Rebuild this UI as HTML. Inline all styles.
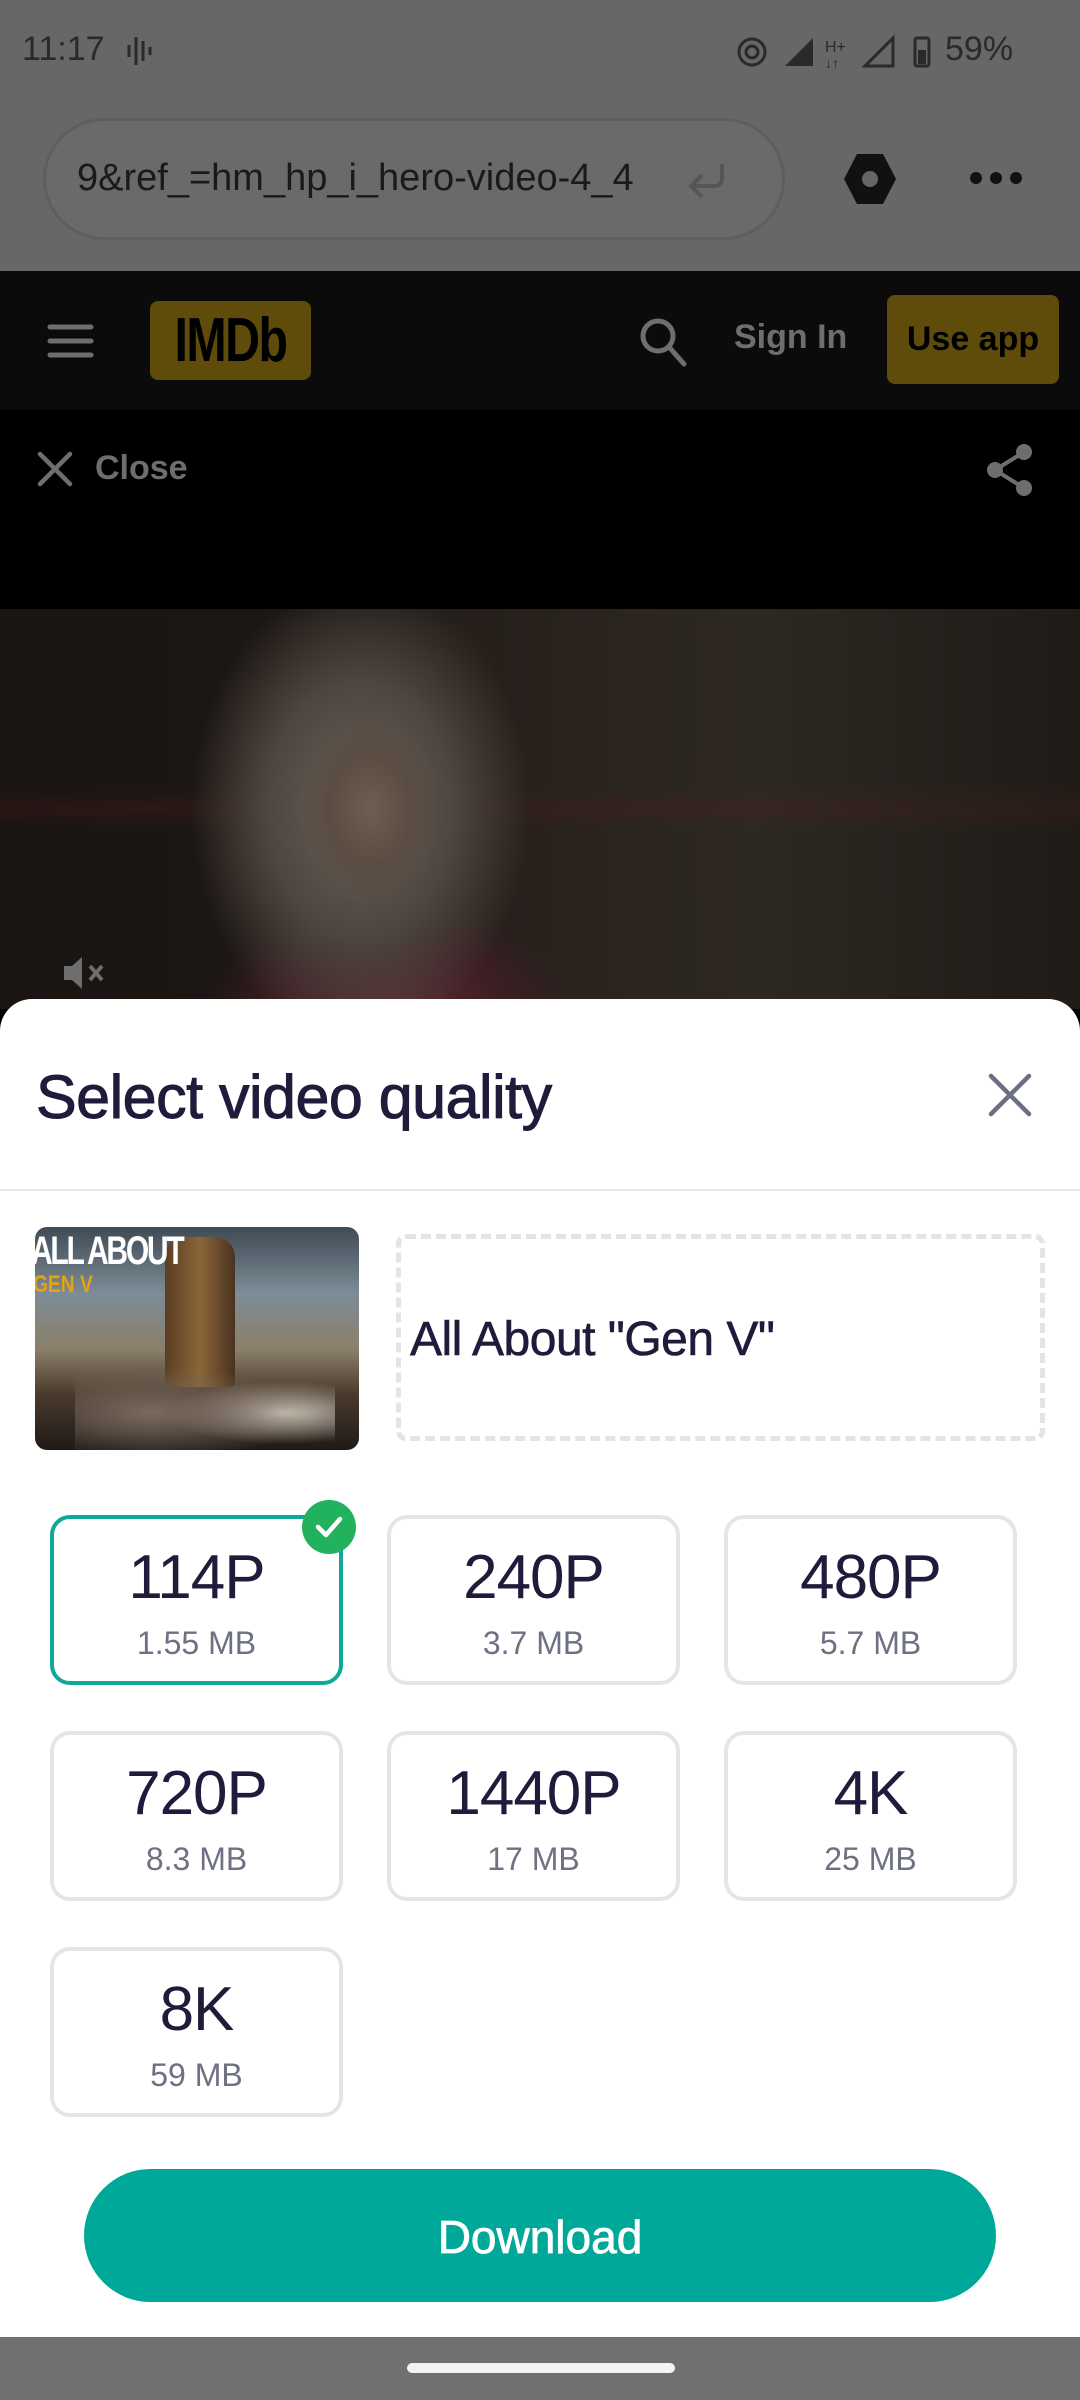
<!DOCTYPE html>
<html><head><meta charset="utf-8">
<style>
*{margin:0;padding:0;box-sizing:border-box}
body{width:1080px;height:2400px;position:relative;overflow:hidden;background:#000;font-family:"Liberation Sans",sans-serif}
.abs{position:absolute}
.top{left:0;top:0;width:1080px;height:271px;background:#676767}
.hdr{left:0;top:271px;width:1080px;height:139px;background:#0b0b0b}
.blk{left:0;top:410px;width:1080px;height:199px;background:#000}
.vid{left:0;top:609px;width:1080px;height:400px;
background:
radial-gradient(ellipse 70px 95px at 370px 200px,#6e5e52 0%,#5a4c42 60%,rgba(0,0,0,0) 100%),
radial-gradient(ellipse 170px 230px at 360px 200px,#6a625a 0%,#4d4640 55%,rgba(0,0,0,0) 100%),
radial-gradient(ellipse 180px 110px at 390px 400px,#5e2c36 0%,#3e1e24 60%,rgba(0,0,0,0) 100%),
linear-gradient(180deg,rgba(0,0,0,0) 0%,rgba(0,0,0,0) 45%,rgba(80,30,30,0.25) 50%,rgba(0,0,0,0) 55%),
linear-gradient(90deg,#1a1412 0%,#1d1714 25%,#2a231e 55%,#2e2822 70%,#201b17 100%)}
.sheet{left:0;top:999px;width:1080px;height:1338px;background:#fff;border-radius:32px 32px 0 0}
.box{width:293px;height:170px;border:4px solid #e4e5ea;border-radius:20px;text-align:center;color:#1e1c3a}
.box.sel{border-color:#0fa89a}
.box .q{font-size:62px;margin-top:26px;line-height:66px;letter-spacing:-1px}
.box .s{font-size:32px;color:#6e7183;margin-top:14px}
</style></head><body>
<div class="abs top"></div>
<div class="abs" style="left:22px;top:30px;font-size:34px;color:#2a2a2a">11:17</div>
<svg class="abs" style="left:125px;top:33px" width="32" height="36"><g stroke="#2a2a2a" stroke-width="3"><line x1="4" y1="12" x2="4" y2="24"/><line x1="11" y1="4" x2="11" y2="32"/><line x1="18" y1="8" x2="18" y2="28"/><line x1="25" y1="14" x2="25" y2="22"/></g></svg>
<svg class="abs" style="left:735px;top:34px" width="280" height="36"><circle cx="17" cy="18" r="13" fill="none" stroke="#2a2a2a" stroke-width="3"/><circle cx="17" cy="18" r="6" fill="none" stroke="#2a2a2a" stroke-width="3"/><polygon points="50,32 78,32 78,4" fill="#2a2a2a"/><text x="90" y="18" font-size="16" fill="#2a2a2a" font-family="Liberation Sans">H+</text><text x="90" y="34" font-size="14" fill="#2a2a2a" font-family="Liberation Sans">↓↑</text><polygon points="130,32 158,32 158,4" fill="none" stroke="#2a2a2a" stroke-width="3"/><rect x="180" y="4" width="14" height="28" rx="2" fill="none" stroke="#2a2a2a" stroke-width="3"/><rect x="183" y="16" width="8" height="14" fill="#2a2a2a"/></svg>
<div class="abs" style="left:945px;top:30px;font-size:34px;color:#2a2a2a">59%</div>
<div class="abs" style="left:43px;top:118px;width:742px;height:122px;border:3px solid #5e5e5e;border-radius:61px;background:#6a6a6a"></div>
<div class="abs" style="left:77px;top:157px;font-size:38px;color:#1a1a1a">9&amp;ref_=hm_hp_i_hero-video-4_4</div>
<svg class="abs" style="left:686px;top:160px" width="44" height="40"><path d="M36 4v14c0 6-3 8-8 8H6M16 15 5 26l11 11" fill="none" stroke="#555" stroke-width="4"/></svg>
<svg class="abs" style="left:843px;top:152px" width="54" height="54"><polygon points="14,2 40,2 53,27 40,52 14,52 1,27" fill="#111"/><circle cx="27" cy="27" r="8" fill="#666"/></svg>
<svg class="abs" style="left:968px;top:170px" width="56" height="16"><circle cx="8" cy="8" r="6" fill="#111"/><circle cx="28" cy="8" r="6" fill="#111"/><circle cx="48" cy="8" r="6" fill="#111"/></svg>
<div class="abs hdr"></div>
<svg class="abs" style="left:47px;top:322px" width="48" height="40"><g stroke="#6e6e6e" stroke-width="5" stroke-linecap="round"><line x1="3" y1="5" x2="44" y2="5"/><line x1="3" y1="19" x2="44" y2="19"/><line x1="3" y1="33" x2="44" y2="33"/></g></svg>
<div class="abs" style="left:150px;top:301px;width:161px;height:79px;background:#5f4c0a;border-radius:8px"></div>
<div class="abs" style="left:150px;top:301px;width:161px;height:79px;color:#000;font-weight:bold;font-size:62px;text-align:center;line-height:79px;letter-spacing:-2px;transform:scaleX(0.78)">IMDb</div>
<svg class="abs" style="left:638px;top:316px" width="50" height="52"><circle cx="20" cy="20" r="15" fill="none" stroke="#6e6e6e" stroke-width="5"/><line x1="31" y1="31" x2="46" y2="48" stroke="#6e6e6e" stroke-width="5" stroke-linecap="round"/></svg>
<div class="abs" style="left:734px;top:318px;font-size:34px;font-weight:bold;color:#6e6e6e">Sign In</div>
<div class="abs" style="left:887px;top:295px;width:172px;height:89px;background:#5f4c0a;border-radius:8px;color:#000;font-size:34px;font-weight:bold;text-align:center;line-height:89px">Use app</div>
<div class="abs blk"></div>
<svg class="abs" style="left:37px;top:451px" width="36" height="36"><g stroke="#6e6e6e" stroke-width="4.5" stroke-linecap="round"><line x1="3" y1="3" x2="33" y2="33"/><line x1="33" y1="3" x2="3" y2="33"/></g></svg>
<div class="abs" style="left:95px;top:449px;font-size:34px;font-weight:bold;color:#6e6e6e">Close</div>
<svg class="abs" style="left:985px;top:443px" width="50" height="54"><g fill="#6e6e6e"><circle cx="39" cy="9" r="8"/><circle cx="39" cy="45" r="8"/><circle cx="10" cy="27" r="8"/></g><g stroke="#6e6e6e" stroke-width="4"><line x1="39" y1="9" x2="10" y2="27"/><line x1="39" y1="45" x2="10" y2="27"/></g></svg>
<div class="abs vid"></div>
<svg class="abs" style="left:62px;top:955px" width="56" height="36"><polygon points="2,11 10,11 20,2 20,34 10,25 2,25" fill="#6e6e6e"/><g stroke="#6e6e6e" stroke-width="4"><line x1="28" y1="11" x2="40" y2="25"/><line x1="40" y1="11" x2="28" y2="25"/></g></svg>
<div class="abs sheet"></div>
<div class="abs" style="left:36px;top:1062px;font-size:61px;color:#1e1c3a;letter-spacing:-0.5px;-webkit-text-stroke:1px #1e1c3a">Select video quality</div>
<svg class="abs" style="left:988px;top:1073px" width="44" height="44"><g stroke="#6b6f80" stroke-width="4.5" stroke-linecap="round"><line x1="3" y1="3" x2="41" y2="41"/><line x1="41" y1="3" x2="3" y2="41"/></g></svg>
<div class="abs" style="left:0;top:1189px;width:1080px;height:2px;background:#e8e8ec"></div>
<div class="abs" style="left:35px;top:1227px;width:324px;height:223px;border-radius:12px;overflow:hidden;background:linear-gradient(180deg,#3f4a55 0%,#7d8c96 30%,#8a7f6a 55%,#4a3a2c 75%,#1f1a18 100%)">
<div class="abs" style="left:130px;top:10px;width:70px;height:150px;background:linear-gradient(90deg,#5a3e22,#8a6538,#4a3220);border-radius:20px 20px 4px 4px"></div>
<div class="abs" style="left:40px;top:130px;width:260px;height:93px;background:radial-gradient(ellipse at 30% 60%,#7a6a60,rgba(0,0,0,0) 60%),radial-gradient(ellipse at 80% 60%,#c8c0b4,rgba(0,0,0,0) 40%)"></div>
<div class="abs" style="left:-4px;top:2px;font-size:40px;font-weight:bold;color:#fff;letter-spacing:-3px;transform:scaleX(0.75);transform-origin:left">ALL ABOUT</div>
<div class="abs" style="left:-2px;top:44px;font-size:24px;font-weight:bold;color:#e8a20c;transform:scaleX(0.8);transform-origin:left">GEN V</div>
</div>
<div class="abs" style="left:396px;top:1234px;width:649px;height:207px;border:5px dashed #e3e3e9;border-radius:10px"></div>
<div class="abs" style="left:410px;top:1312px;font-size:48px;color:#1e1c3a;letter-spacing:-0.5px;-webkit-text-stroke:0.6px #1e1c3a">All About "Gen V"</div>
<div class="abs box sel" style="left:50px;top:1515px"><div class="q">114P</div><div class="s">1.55 MB</div></div>
<div class="abs box" style="left:387px;top:1515px"><div class="q">240P</div><div class="s">3.7 MB</div></div>
<div class="abs box" style="left:724px;top:1515px"><div class="q">480P</div><div class="s">5.7 MB</div></div>
<div class="abs box" style="left:50px;top:1731px"><div class="q">720P</div><div class="s">8.3 MB</div></div>
<div class="abs box" style="left:387px;top:1731px"><div class="q">1440P</div><div class="s">17 MB</div></div>
<div class="abs box" style="left:724px;top:1731px"><div class="q">4K</div><div class="s">25 MB</div></div>
<div class="abs box" style="left:50px;top:1947px"><div class="q">8K</div><div class="s">59 MB</div></div>
<svg class="abs" style="left:302px;top:1500px" width="54" height="54"><circle cx="27" cy="27" r="27" fill="#22b25e"/><path d="M16 27l8 8 14-16" fill="none" stroke="#fff" stroke-width="4.5" stroke-linecap="round" stroke-linejoin="round"/></svg>
<div class="abs" style="left:84px;top:2169px;width:912px;height:133px;border-radius:67px;background:#00a89a;color:#fff;font-size:46px;text-align:center;line-height:136px;-webkit-text-stroke:0.8px #fff">Download</div>
<div class="abs" style="left:0;top:2337px;width:1080px;height:63px;background:#707070"></div>
<div class="abs" style="left:407px;top:2363px;width:268px;height:10px;border-radius:5px;background:#f4f4f4"></div>
</body></html>
